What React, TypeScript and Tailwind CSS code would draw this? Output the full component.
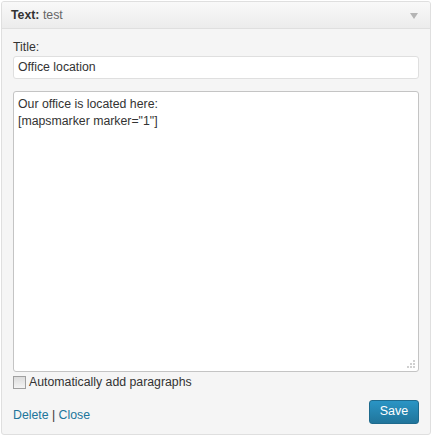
import React from "react";

const font = { fontFamily: '"Liberation Sans", Arial, sans-serif' };

const App = () => {
    return (
        <div className="w-[434px] h-[437px] bg-white pt-[1px] pl-[1px]" style={font}>
            <div className="w-[430px] h-[434px] border border-[#dfdfdf] rounded-[3px] bg-[#f5f5f5] flex flex-col overflow-hidden">
                <div className="h-[27px] shrink-0 flex items-center justify-between pl-[9px] pr-[9px] pt-[1px] border-b border-[#dfdfdf] bg-gradient-to-b from-[#f9f9f9] to-[#ececec] text-[12.3px] text-[#333]">
                    <div>
                        <span className="font-bold">Text:</span> <span className="text-[#666]">test</span>
                    </div>
                    <svg width="8" height="6" viewBox="0 0 8 6" className="mr-[3px]">
                        <path d="M0 0 L8 0 L4 6 Z" fill="#b4b4b4" />
                    </svg>
                </div>
                <div className="flex flex-col px-[11px] pt-[11px] text-[12.3px] text-[#333]">
                    <label className="leading-[15px]">Title:</label>
                    <div className="mt-[1px] h-[23px] bg-white border border-[#dfdfdf] rounded-[3px] px-[4px] flex items-center">Office location</div>
                    <div className="relative mt-[12px] h-[281px] bg-white border border-[#c4c4c4] rounded-[3px] px-[4px] pt-[4px] leading-[17px]">
                        <div>Our office is located here:</div>
                        <div>[mapsmarker marker="1"]</div>
                        <svg width="10" height="10" viewBox="0 0 10 10" className="absolute right-[3px] bottom-[3px]">
                            <rect x="8" y="2" width="2" height="2" fill="#d0d0d0" />
                            <rect x="5" y="5" width="2" height="2" fill="#d0d0d0" />
                            <rect x="8" y="5" width="2" height="2" fill="#d0d0d0" />
                            <rect x="2" y="8" width="2" height="2" fill="#d0d0d0" />
                            <rect x="5" y="8" width="2" height="2" fill="#d0d0d0" />
                            <rect x="8" y="8" width="2" height="2" fill="#d0d0d0" />
                        </svg>
                    </div>
                    <div className="mt-[3px] flex items-center h-[14px]">
                        <span className="w-[13px] h-[13px] border border-[#a0a0a0] bg-gradient-to-b from-[#dcdcdc] to-[#f4f4f4] mr-[3px]" />
                        <span>Automatically add paragraphs</span>
                    </div>
                    <div className="mt-[10px] flex items-center justify-between">
                        <div className="text-[#21759b] pt-[7px]">
                            <span>Delete</span> <span className="text-[#333]">|</span> <span>Close</span>
                        </div>
                        <button className="w-[50px] h-[24px] rounded-[3px] border border-[#1e6a8d] bg-gradient-to-b from-[#2a95c5] to-[#21759b] text-white text-[12.5px]">Save</button>
                    </div>
                </div>
            </div>
        </div>
    )
}

export default App;
